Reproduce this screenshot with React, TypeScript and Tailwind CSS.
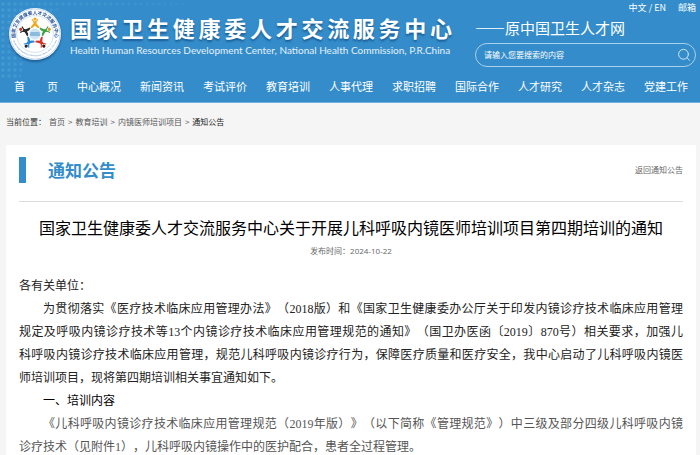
import React from 'react';

const NAV_ITEMS = [
  '首\u3000\u3000页',
  '中心概况',
  '新闻资讯',
  '考试评价',
  '教育培训',
  '人事代理',
  '求职招聘',
  '国际合作',
  '人才研究',
  '人才杂志',
  '党建工作',
];

const CRUMBS = ['首页', '教育培训', '内镜医师培训项目'];

interface ArticleLine {
  text: string;
  indent?: boolean;
  full?: boolean;
}

const INTRO: ArticleLine[] = [
  { text: '为贯彻落实《医疗技术临床应用管理办法》（2018版）和《国家卫生健康委办公厅关于印发内镜诊疗技术临床应用管理', indent: true, full: true },
  { text: '规定及呼吸内镜诊疗技术等13个内镜诊疗技术临床应用管理规范的通知》（国卫办医函〔2019〕870号）相关要求，加强儿', full: true },
  { text: '科呼吸内镜诊疗技术临床应用管理，规范儿科呼吸内镜诊疗行为，保障医疗质量和医疗安全，我中心启动了儿科呼吸内镜医', full: true },
  { text: '师培训项目，现将第四期培训相关事宜通知如下。' },
];

const CONTENT: ArticleLine[] = [
  { text: '《儿科呼吸内镜诊疗技术临床应用管理规范（2019年版）》（以下简称《管理规范》）中三级及部分四级儿科呼吸内镜', indent: true, full: true },
  { text: '诊疗技术（见附件1），儿科呼吸内镜操作中的医护配合，患者全过程管理。' },
];

// Five figures around the globe, one every 72 degrees
const FIGURES = [
  { color: '#f2a71b', head: '#f2a71b', angle: 0 },
  { color: '#3fa447', head: '#d9962a', angle: 72 },
  { color: '#d8342c', head: '#3a1512', angle: 144 },
  { color: '#2487d8', head: '#15283c', angle: 216 },
  { color: '#26292c', head: '#c0392b', angle: 288 },
];

const Logo: React.FC = () => (
  <svg viewBox="0 0 54 54" className="size-[54px] shrink-0 drop-shadow-[0_2px_1px_rgba(0,40,90,0.45)]" role="img" aria-label="中心标志">
    <defs>
      <path id="ring-top" d="M 7.6 31 A 19.8 19.8 0 1 1 46.4 31" />
      <path id="ring-bottom" d="M 4.5 31 A 23 23 0 0 0 49.5 31" />
    </defs>
    <circle cx="27" cy="27" r="26" fill="#fff" />
    <circle cx="27" cy="27" r="25" fill="none" stroke="#8fb4d8" strokeWidth="0.5" />
    <circle cx="27" cy="27" r="18.4" fill="none" stroke="#8fb4d8" strokeWidth="0.4" />
    <text fontSize="4.6" fontWeight="700" fill="#24509a" fontFamily="Noto Sans CJK SC, sans-serif" textAnchor="middle">
      <textPath href="#ring-top" startOffset="50%">国家卫生健康委人才交流服务中心</textPath>
    </text>
    <text fontSize="2" fill="#5b86bd" fontFamily="Liberation Sans, sans-serif" textAnchor="middle">
      <textPath href="#ring-bottom" startOffset="50%">Health Human Resources Development Center, NHC, P.R.China</textPath>
    </text>
    {FIGURES.map((f) => (
      <g key={f.angle} transform={`rotate(${f.angle} 27 27)`}>
        <circle cx="27" cy="12" r="1.6" fill={f.head} />
        <path d="M24.2 12.6 L26.2 15 H27.8 L29.8 12.6" fill="none" stroke={f.color} strokeWidth="1.1" strokeLinecap="round" />
        <path d="M25.6 14.4 H28.4 L28.6 16.8 L31.6 20.2 L30 21.4 L27 18.6 L24 21.4 L22.4 20.2 L25.4 16.8 Z" fill={f.color} />
      </g>
    ))}
    <circle cx="27" cy="27" r="6.8" fill="#fff" />
    <circle cx="27" cy="27" r="5.6" fill="#cfe5f4" />
    <path d="M22.4 26 H31.6 M22 28 H32" stroke="#3d87bf" strokeWidth="0.9" />
  </svg>
);

const Dots: React.FC = () => (
  <svg className="absolute left-0 top-0 h-full w-[240px]" aria-hidden="true">
    <defs>
      <pattern id="dots" width="6" height="6" patternUnits="userSpaceOnUse">
        <circle cx="3" cy="4" r="1.8" fill="#5ba9dc" />
      </pattern>
      <linearGradient id="dots-fade" x1="0" y1="0" x2="1" y2="0">
        <stop offset="0" stopColor="#fff" stopOpacity="0.4" />
        <stop offset="1" stopColor="#fff" stopOpacity="0.1" />
      </linearGradient>
      <mask id="dots-mask">
        <path d="M0 0 H190 L180 8 H60 L30 30 L20 80 H0 Z" fill="url(#dots-fade)" />
      </mask>
    </defs>
    <rect width="240" height="84" fill="url(#dots)" mask="url(#dots-mask)" />
  </svg>
);

const Lines: React.FC<{ lines: ArticleLine[]; className: string }> = ({ lines, className }) => (
  <p className={className}>
    {lines.map((line) => (
      <span
        key={line.text}
        className={`block whitespace-nowrap ${line.indent ? 'pl-6' : ''} ${line.full ? '[text-align-last:justify]' : ''}`}
      >
        {line.text}
      </span>
    ))}
  </p>
);

const Header: React.FC = () => (
  <header className="relative border-b border-[#6fb0dd] bg-[#348dca] text-white">
    <Dots />
    <div className="relative flex h-[70px] justify-between pl-2 pr-1">
      <div className="flex items-start pt-[7px]">
        <Logo />
        <div className="ml-2 w-[382px] pt-1">
          <div className="whitespace-nowrap text-[22px] font-bold leading-[32px] [text-align-last:justify] [text-shadow:0_2px_2px_rgba(0,50,100,0.5)]">
            国家卫生健康委人才交流服务中心
          </div>
          <div className="whitespace-nowrap font-['Lato','Noto_Sans_CJK_SC',sans-serif] text-[10px] leading-[14px] text-[#e4f1fa]">
            Health Human Resources Development Center, National Health Commission, P.R.China
          </div>
        </div>
      </div>
      <div className="w-[221px]">
        <div className="flex justify-end gap-3 text-[9px] leading-[15px]">
          <span>
            <a href="#cn">中文</a> / <a href="#en">EN</a>
          </span>
          <a href="#mail">邮箱</a>
        </div>
        <div className="whitespace-nowrap text-[15px] leading-[26px]">——原中国卫生人才网</div>
        <form className="mt-[2px] flex h-6 items-center rounded-full border border-[#a9d0ec] pl-2 pr-1" onSubmit={(e) => e.preventDefault()}>
          <input
            type="text"
            aria-label="搜索"
            placeholder="请输入您要搜索的内容"
            className="min-w-0 flex-1 bg-transparent text-[8px] leading-3 outline-none placeholder:text-white"
          />
          <button type="submit" aria-label="搜索">
            <svg viewBox="0 0 14 14" className="size-[14px]" fill="none" stroke="#d3e7f5" strokeWidth="1" strokeLinecap="round">
              <circle cx="6.5" cy="6.3" r="4.9" />
              <path d="M10 9.8 L12.6 12.4" />
            </svg>
          </button>
        </form>
      </div>
    </div>
    <nav className="relative flex h-8 items-center justify-between pl-[14px] pr-3 text-[11px] leading-4">
      {NAV_ITEMS.map((item) => (
        <a key={item} href="#nav" className="whitespace-pre">
          {item}
        </a>
      ))}
    </nav>
  </header>
);

export default function App() {
  return (
    <div
      lang="zh-CN"
      className="min-h-screen bg-[#f5f5f5] font-['Noto_Sans_CJK_SC',sans-serif] text-[#333] [text-spacing-trim:space-all]"
    >
      <Header />
      <nav aria-label="当前位置" className="flex h-[42px] items-start gap-[3px] px-[6px] pt-[13px] text-[8px] leading-3 text-[#555]">
        <span className="text-[#333]">当前位置：</span>
        {CRUMBS.map((crumb) => (
          <React.Fragment key={crumb}>
            <a href="#crumb">{crumb}</a>
            <span>&gt;</span>
          </React.Fragment>
        ))}
        <span className="text-[#222]">通知公告</span>
      </nav>

      <main className="mx-[6px] mr-1 bg-white px-[13px] pt-3">
        <div className="flex h-[45px] items-start justify-between border-b border-[#ddd]">
          <div className="flex items-center">
            <span className="h-[26px] w-[7px] bg-[#348dca]" />
            <h2 className="ml-[22px] text-[17px] font-bold leading-[26px] text-[#348dca]">通知公告</h2>
          </div>
          <a href="#back" className="text-[8px] leading-[26px] text-[#666]">
            返回通知公告
          </a>
        </div>

        <article>
          <h1 className="mt-[13px] whitespace-nowrap text-center text-[16px] leading-6 text-black">
            国家卫生健康委人才交流服务中心关于开展儿科呼吸内镜医师培训项目第四期培训的通知
          </h1>
          <div className="mt-1 text-center font-['Open_Sans','Noto_Sans_CJK_SC',sans-serif] text-[8px] leading-4 text-[#666]">
            发布时间：2024-10-22
          </div>
          <div className="mt-4 font-['Liberation_Serif','Noto_Sans_CJK_SC',serif] text-[12px] leading-[23px]">
            <p className="text-[#222]">各有关单位：</p>
            <Lines lines={INTRO} className="text-[#222]" />
            <h3 className="pl-6 text-black">一、培训内容</h3>
            <Lines lines={CONTENT} className="text-[#555]" />
          </div>
        </article>
      </main>
    </div>
  );
}
